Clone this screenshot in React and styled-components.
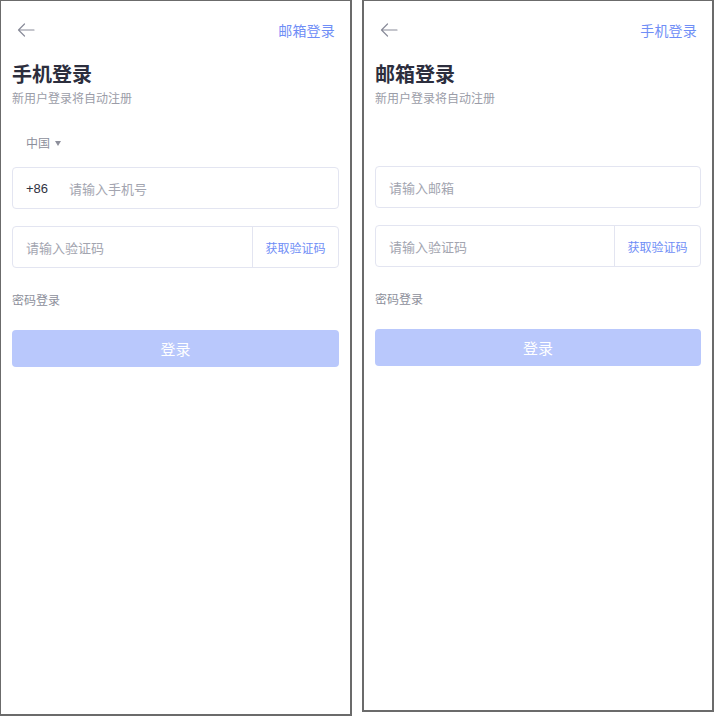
import styled, { createGlobalStyle } from "styled-components";

const GlobalStyle = createGlobalStyle`
  body {
    margin: 0;
    background: #ffffff;
    font-family: "Noto Sans CJK SC", "Noto Sans", sans-serif;
  }
`;

const Page = styled.div`
  display: flex;
  align-items: flex-start;
  gap: 10px;
  width: 714px;
`;

const Screen = styled.div`
  box-sizing: border-box;
  width: 352px;
  height: ${(p) => p.$height}px;
  border: 1px solid #6b6b6b;
  border-width: ${(p) => (p.$thick ? "1px 2px 2px 2px" : "1px 2px 2px 1px")};
  background: #fff;
  padding: 0 11px;
  display: flex;
  flex-direction: column;
`;

const Header = styled.div`
  height: 57px;
  display: flex;
  align-items: center;
  justify-content: space-between;
  padding: 0 4px 0 5px;
`;

const BackButton = styled.span`
  display: flex;
  align-items: center;
  width: 20px;
  height: 20px;
`;

const SwitchLink = styled.span`
  font-size: 14px;
  color: #6f8ef6;
  letter-spacing: 0.2px;
`;

const Title = styled.h1`
  margin: 2px 0 0;
  font-size: 20px;
  line-height: 28px;
  font-weight: 700;
  color: #2c2e3d;
`;

const Subtitle = styled.p`
  margin: 1px 0 0;
  font-size: 12px;
  line-height: 17px;
  color: #9b9da8;
`;

const CountryRow = styled.div`
  margin-top: 28px;
  height: 17px;
  padding-left: 14px;
  display: flex;
  align-items: center;
  gap: 5px;
  font-size: 12px;
  color: #8d8f9b;
  visibility: ${(p) => (p.$hidden ? "hidden" : "visible")};
`;

const Caret = styled.span`
  width: 0;
  height: 0;
  border-left: 3.5px solid transparent;
  border-right: 3.5px solid transparent;
  border-top: 5px solid #8d8f9b;
  margin-top: 1px;
`;

const Field = styled.div`
  box-sizing: border-box;
  height: 42px;
  margin-top: ${(p) => p.$gap}px;
  border: 1px solid #e3e5f1;
  border-radius: 4px;
  display: flex;
  align-items: center;
  font-size: 13px;
`;

const Prefix = styled.span`
  width: 56px;
  padding-left: 13px;
  box-sizing: border-box;
  color: #30323f;
  font-family: "Liberation Sans", "Noto Sans", sans-serif;
  font-size: 13px;
`;

const Placeholder = styled.span`
  flex: 1;
  padding-left: ${(p) => (p.$indent ? 0 : 13)}px;
  color: #a3a5b0;
`;

const CodeButton = styled.span`
  width: 85px;
  height: 100%;
  border-left: 1px solid #e3e5f1;
  display: flex;
  align-items: center;
  justify-content: center;
  font-size: 12px;
  color: #6f8ef6;
`;

const PasswordLink = styled.span`
  margin-top: 23px;
  font-size: 12px;
  line-height: 17px;
  color: #8d8f9b;
`;

const LoginButton = styled.button`
  margin-top: 22px;
  height: 37px;
  border: none;
  border-radius: 4px;
  background: #b9c8fc;
  color: #ffffff;
  font-size: 15px;
  font-family: inherit;
`;

const ArrowIcon = () => (
  <svg width="18" height="14" viewBox="0 0 18 14" fill="none">
    <path
      d="M17 7H1.5M7.5 1L1.5 7l6 6"
      stroke="#8a8c9a"
      strokeWidth="1.2"
      strokeLinecap="round"
      strokeLinejoin="round"
    />
  </svg>
);

const LoginScreen = ({ mode, height, thick }) => {
  const isPhone = mode === "phone";
  return (
    <Screen $height={height} $thick={thick}>
      <Header>
        <BackButton>
          <ArrowIcon />
        </BackButton>
        <SwitchLink>{isPhone ? "邮箱登录" : "手机登录"}</SwitchLink>
      </Header>
      <Title>{isPhone ? "手机登录" : "邮箱登录"}</Title>
      <Subtitle>新用户登录将自动注册</Subtitle>
      <CountryRow $hidden={!isPhone}>
        中国 <Caret />
      </CountryRow>
      <Field $gap={isPhone ? 16 : 15}>
        {isPhone && <Prefix>+86</Prefix>}
        <Placeholder $indent={isPhone}>
          {isPhone ? "请输入手机号" : "请输入邮箱"}
        </Placeholder>
      </Field>
      <Field $gap={17}>
        <Placeholder>请输入验证码</Placeholder>
        <CodeButton>获取验证码</CodeButton>
      </Field>
      <PasswordLink>密码登录</PasswordLink>
      <LoginButton>登录</LoginButton>
    </Screen>
  );
};

export default function App() {
  return (
    <>
      <GlobalStyle />
      <Page>
        <LoginScreen mode="phone" height={716} />
        <LoginScreen mode="email" height={712} thick />
      </Page>
    </>
  );
}
